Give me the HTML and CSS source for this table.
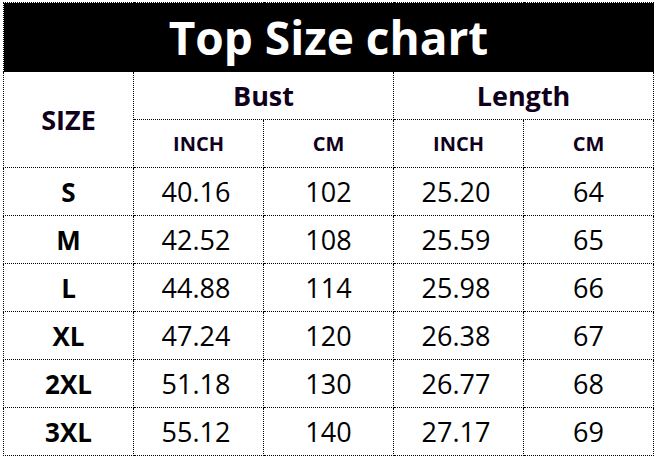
FILE: index.html
```html
<!DOCTYPE html>
<html>
<head>
<meta charset="utf-8">
<link rel="stylesheet" href="styles.css">
</head>
<body>
<table class="chart">
  <colgroup>
    <col class="c"><col class="c"><col class="c"><col class="c"><col class="c">
  </colgroup>
  <tr class="title-row"><th colspan="5" class="title">Top Size chart</th></tr>
  <tr class="head-row">
    <th rowspan="2" class="size-head">SIZE</th>
    <th colspan="2" class="group">Bust</th>
    <th colspan="2" class="group">Length</th>
  </tr>
  <tr class="head-row">
    <th class="unit">INCH</th><th class="unit">CM</th><th class="unit">INCH</th><th class="unit">CM</th>
  </tr>
  <tr><th class="size">S</th><td class="inch">40.16</td><td>102</td><td class="inch">25.20</td><td>64</td></tr>
  <tr><th class="size">M</th><td class="inch">42.52</td><td>108</td><td class="inch">25.59</td><td>65</td></tr>
  <tr><th class="size">L</th><td class="inch">44.88</td><td>114</td><td class="inch">25.98</td><td>66</td></tr>
  <tr><th class="size">XL</th><td class="inch">47.24</td><td>120</td><td class="inch">26.38</td><td>67</td></tr>
  <tr><th class="size">2XL</th><td class="inch">51.18</td><td>130</td><td class="inch">26.77</td><td>68</td></tr>
  <tr><th class="size">3XL</th><td class="inch">55.12</td><td>140</td><td class="inch">27.17</td><td>69</td></tr>
</table>
</body>
</html>
```
FILE: styles.css
```css
html, body {
  margin: 0;
  padding: 0;
  background: #fff;
}
body {
  padding: 2px 0 0 3px;
  font-family: "Open Sans", "Noto Sans", sans-serif;
  color: #000;
}
.chart {
  border-collapse: collapse;
  table-layout: fixed;
  width: 651px;
}
.c { width: 130px; }
.chart th, .chart td {
  border: 1px dotted #000;
  padding: 0;
  text-align: center;
  vertical-align: middle;
  height: 47px;
  line-height: 1;
}
.chart td {
  font-size: 27px;
  font-weight: 400;
}
.chart td.inch {
  padding-right: 5px;
}
.title-row th {
  height: 68px;
}
.title {
  background: #000;
  color: #fff;
  font-size: 46px;
  font-weight: 700;
}
.size-head, .group {
  font-size: 27px;
  font-weight: 700;
  color: #10001c;
}
.unit {
  font-size: 20px;
  font-weight: 700;
  color: #10001c;
}
.size {
  font-size: 26px;
  font-weight: 700;
}
```
